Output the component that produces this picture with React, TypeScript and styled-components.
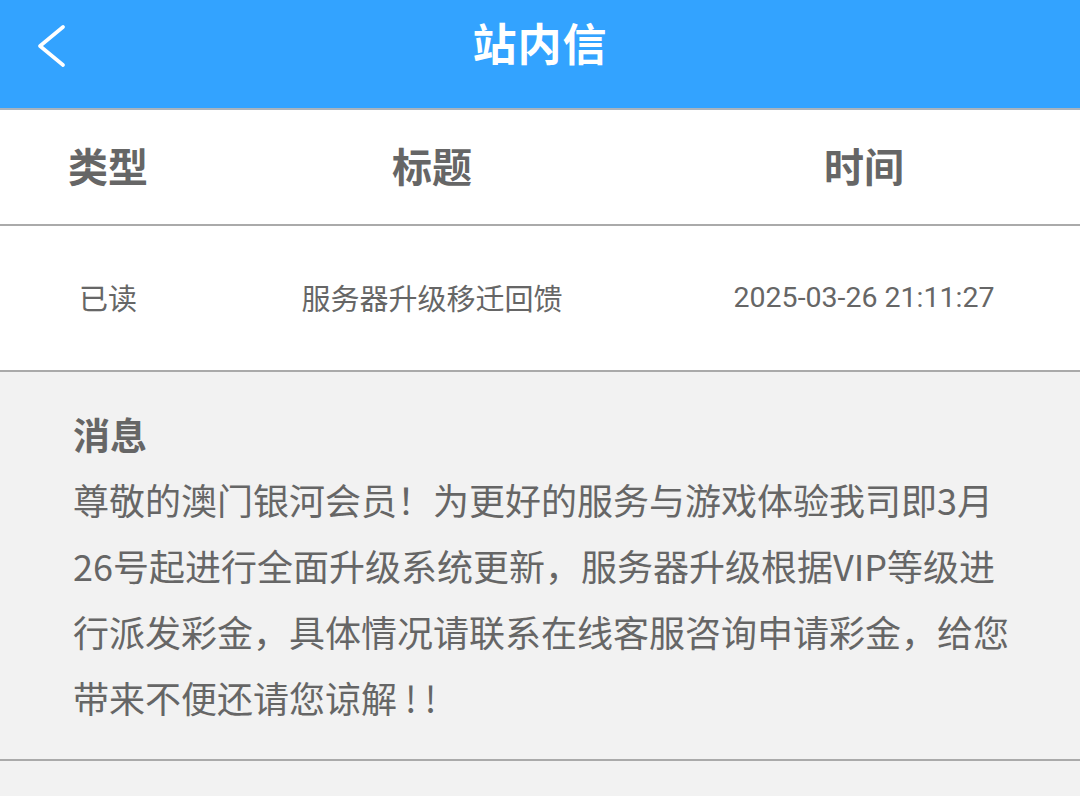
import React from "react";
import styled, { createGlobalStyle } from "styled-components";

const Global = createGlobalStyle`
  html, body { margin: 0; padding: 0; background: #f2f2f2; }
  body { font-family: "Noto Sans CJK SC", "Noto Sans", sans-serif; }
  * { box-sizing: border-box; }
`;

const Page = styled.div`
  width: 1080px;
  min-height: 796px;
  background: #f2f2f2;
  display: flex;
  flex-direction: column;
`;

const TopBar = styled.header`
  height: 110px;
  background: #33a3ff;
  border-bottom: 2px solid #a9b3bd;
  display: grid;
  grid-template-columns: 120px 1fr 120px;
  align-items: center;
`;

const BackButton = styled.button`
  border: none;
  background: transparent;
  padding: 0 0 0 36px;
  height: 100%;
  display: flex;
  align-items: center;
  margin-top: -16px;
  cursor: pointer;
`;

const Title = styled.h1`
  margin: 0 0 24px;
  text-align: center;
  color: #ffffff;
  font-size: 44px;
  font-weight: 700;
  letter-spacing: 1px;
`;

const Row = styled.div<{ $h: number }>`
  height: ${(p) => p.$h}px;
  background: #ffffff;
  border-bottom: 2px solid #aaaaaa;
  display: grid;
  grid-template-columns: 216px 432px 432px;
  align-items: center;
`;

const HeadCell = styled.div`
  text-align: center;
  font-size: 40px;
  font-weight: 700;
  color: #666666;
  margin-top: -4px;
`;

const Cell = styled.div<{ $mono?: boolean }>`
  text-align: center;
  font-size: ${(p) => (p.$mono ? "28.5px" : "29px")};
  color: #666666;
  font-family: ${(p) =>
    p.$mono ? `Roboto, "Noto Sans CJK SC", sans-serif` : `"Noto Sans CJK SC", sans-serif`};
  margin-top: -2px;
`;

const Message = styled.section`
  background: #f2f2f2;
  border-bottom: 2px solid #aaaaaa;
  padding: 37px 60px 29px 73px;
`;

const MsgTitle = styled.h2`
  margin: 0 0 7px;
  font-size: 37px;
  line-height: 50px;
  font-weight: 700;
  color: #666666;
`;

const MsgBody = styled.p`
  margin: 0;
  font-size: 36px;
  line-height: 66px;
  color: #666666;
`;

export default function App() {
  return (
    <Page>
      <Global />
      <TopBar>
        <BackButton aria-label="back">
          <svg width="30" height="42" viewBox="0 0 30 42">
            <polyline
              points="27,2 4,21 27,40"
              fill="none"
              stroke="#ffffff"
              strokeWidth="3.6"
              strokeLinecap="round"
              strokeLinejoin="round"
            />
          </svg>
        </BackButton>
        <Title>站内信</Title>
        <div />
      </TopBar>
      <Row $h={116}>
        <HeadCell>类型</HeadCell>
        <HeadCell>标题</HeadCell>
        <HeadCell>时间</HeadCell>
      </Row>
      <Row $h={146}>
        <Cell>已读</Cell>
        <Cell>服务器升级移迁回馈</Cell>
        <Cell $mono>2025-03-26 21:11:27</Cell>
      </Row>
      <Message>
        <MsgTitle>消息</MsgTitle>
        <MsgBody>
          尊敬的澳门银河会员！为更好的服务与游戏体验我司即3月26号起进行全面升级系统更新，服务器升级根据VIP等级进行派发彩金，具体情况请联系在线客服咨询申请彩金，给您带来不便还请您谅解 ! !
        </MsgBody>
      </Message>
    </Page>
  );
}
